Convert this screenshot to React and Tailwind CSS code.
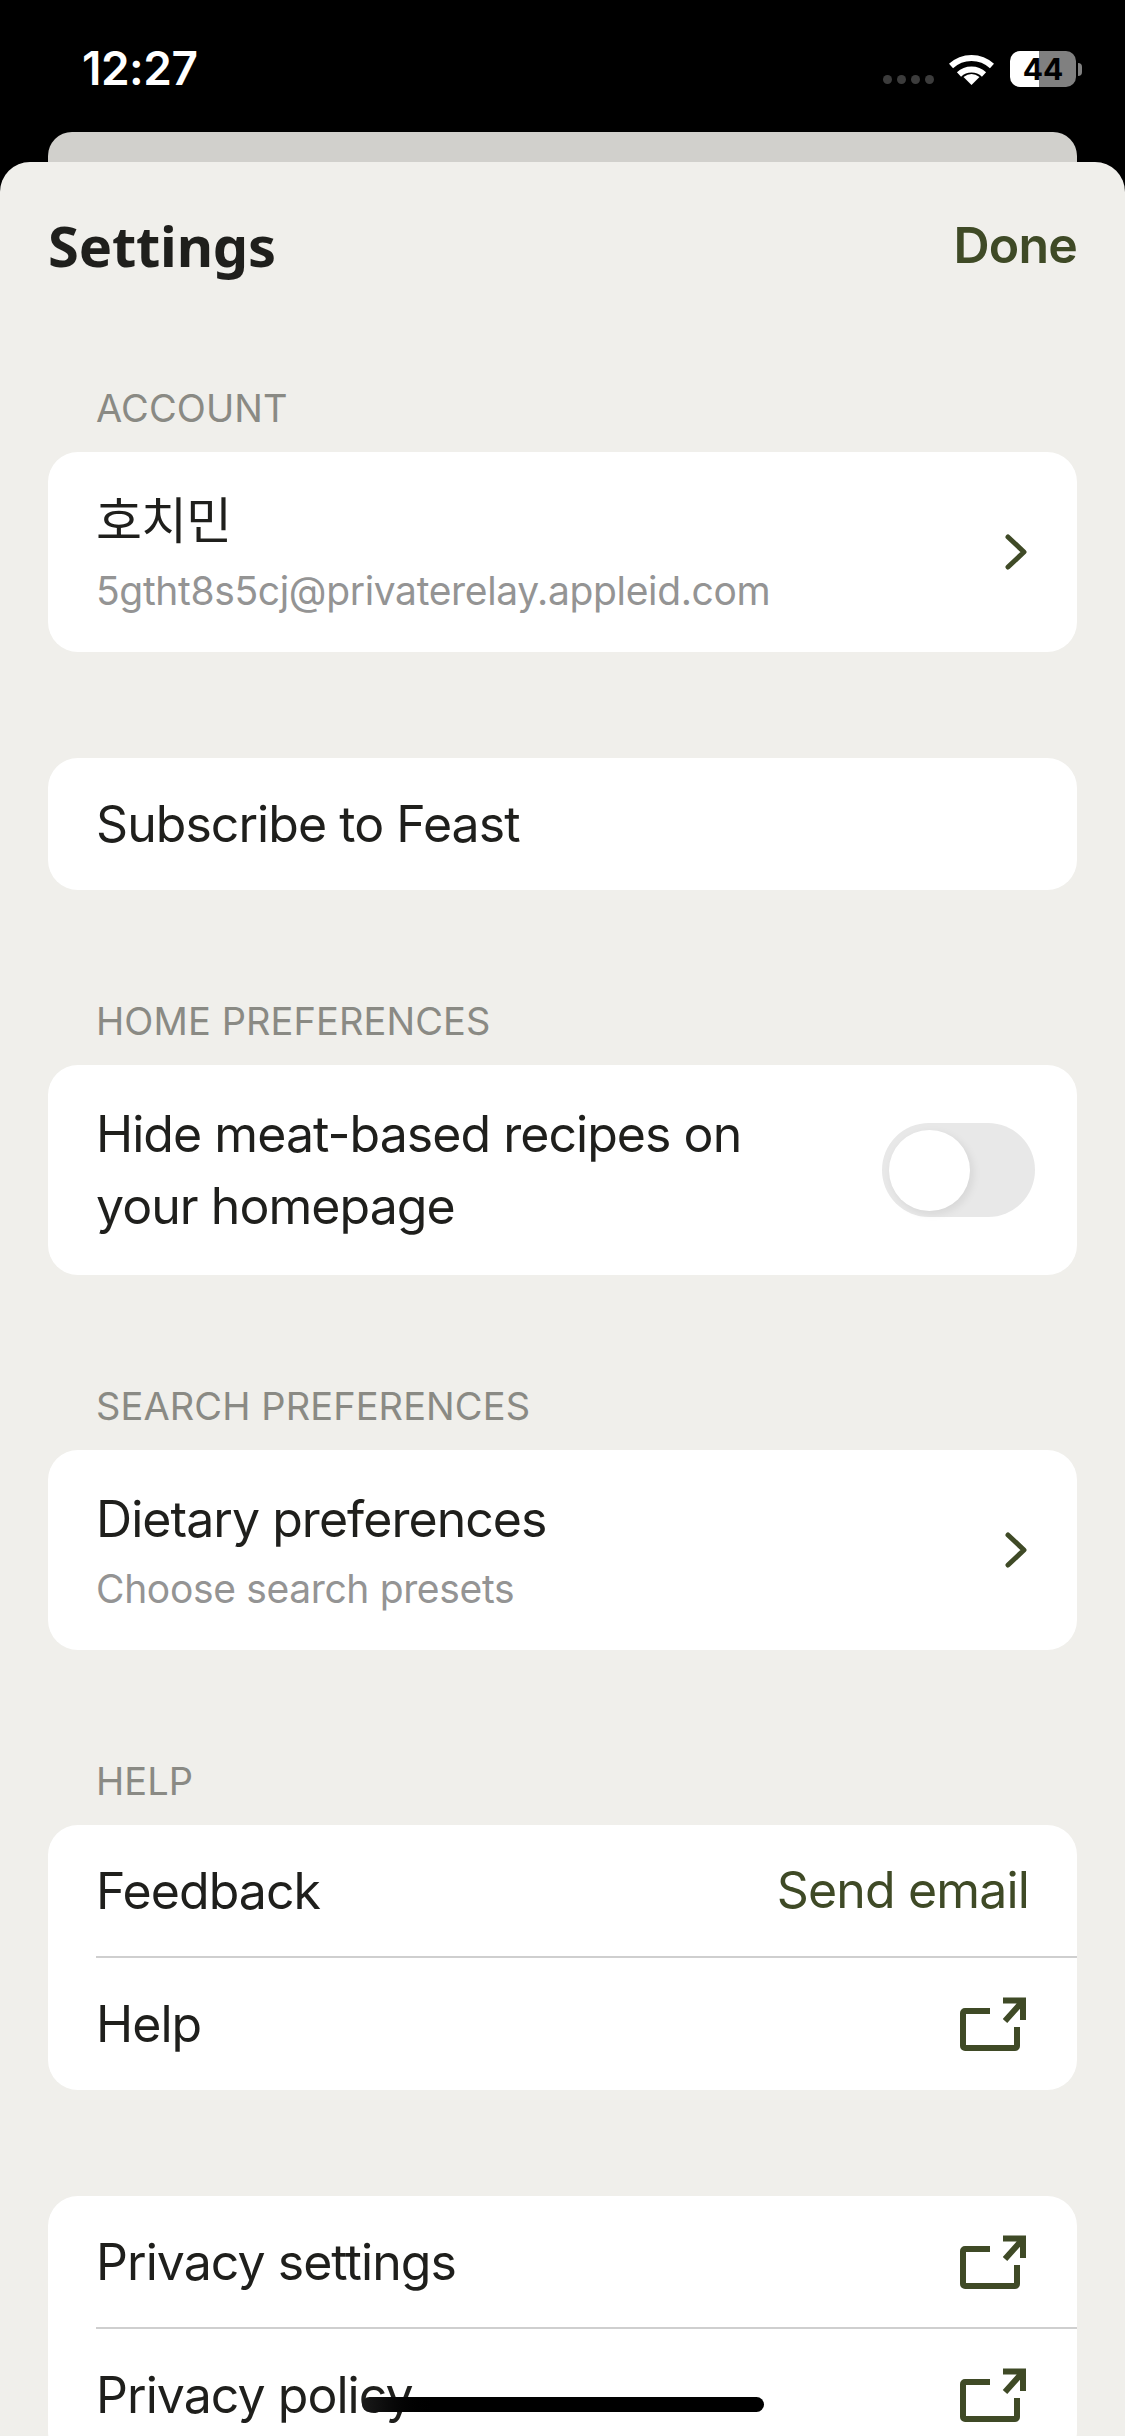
const GREEN = '#3f4a26';

const ExternalIcon = () => (
  <svg width="66" height="54" viewBox="0 0 66 54" fill="none" stroke={GREEN} strokeWidth="6" className="mr-[3px]">
    <path d="M30 14H5a2 2 0 0 0-2 2v33a2 2 0 0 0 2 2h50a2 2 0 0 0 2-2V30" />
    <path d="M43 3.500H63V23M45 24L62 5" />
  </svg>
);

const Chevron = () => (
  <svg width="22" height="36" viewBox="0 0 22 36" fill="none" stroke={GREEN} strokeWidth="5" strokeLinecap="round" strokeLinejoin="round">
    <path d="M3 3L19 18L3 33" />
  </svg>
);

const Wifi = () => (
  <svg width="45" height="33" viewBox="0 0 45 33" fill="none" stroke="#fff" strokeWidth="6">
    <path d="M2 14A30 30 0 0 1 43 14" />
    <path d="M10 22.500A18 18 0 0 1 35 22.500" />
    <path d="M22.500 33L14.500 25Q22.500 19 30.500 25Z" fill="#fff" stroke="none" />
  </svg>
);

const Label = ({ children }) => (
  <div className="px-[48px] h-[44px] mb-[22px] flex items-center text-[38px] tracking-[0.1px] text-[#8a8a84]">{children}</div>
);

const Card = ({ children }) => (
  <div className="bg-white rounded-[30px] overflow-hidden">{children}</div>
);

const Row = ({ label, right, divider }) => (
  <div className={`ml-[48px] pr-[48px] flex items-center justify-between ${divider ? 'border-b-2 border-[#cfcfcf] h-[133px]' : 'h-[132px]'}`}>
    <span className="text-[50px] leading-[72px] tracking-[-0.95px] text-[#1f1f1c]">{label}</span>
    {right}
  </div>
);

const SubRow = ({ title, sub }) => (
  <div className="h-[200px] pl-[48px] pr-[50px] flex items-center justify-between">
    <div>
      <div className="text-[50px] leading-[66px] tracking-[-0.95px] text-[#1f1f1c]">{title}</div>
      <div className="text-[39px] leading-[50px] mt-[12px] tracking-[-0.35px] text-[#949494]">{sub}</div>
    </div>
    <Chevron />
  </div>
);

export default function App() {
  return (
    <div className="w-[1125px] h-[2436px] overflow-hidden bg-black relative font-['Inter','Noto_Sans_CJK_KR',sans-serif]">
      {/* Status bar */}
      <div className="h-[132px] pl-[82px] pr-[43px] pt-[44px] flex justify-between items-start">
        <span className="text-[46px] leading-[48px] font-semibold tracking-[-0.5px] text-white">12:27</span>
        <div className="flex items-start">
          <div className="flex gap-[5px] mt-[31px] mr-[15px]">
            <div className="w-[9px] h-[9px] rounded-full bg-[#3c3c3c]" />
            <div className="w-[9px] h-[9px] rounded-full bg-[#3c3c3c]" />
            <div className="w-[9px] h-[9px] rounded-full bg-[#3c3c3c]" />
            <div className="w-[9px] h-[9px] rounded-full bg-[#3c3c3c]" />
          </div>
          <div className="mt-[8px] mr-[16px]">
            <Wifi />
          </div>
          <div className="flex items-center mt-[7px]">
            <div className="relative w-[66px] h-[36px] flex items-center justify-center">
              <div className="absolute left-0 top-0 bottom-0 w-[29px] rounded-l-[10px] bg-white" />
              <div className="absolute left-[29px] right-0 top-0 bottom-0 rounded-r-[10px] bg-[#808080]" />
              <span className="relative text-[30px] leading-none font-bold text-black">44</span>
            </div>
            <div className="w-[4px] h-[13px] ml-[2px] rounded-r-full bg-[#808080]" />
          </div>
        </div>
      </div>

      {/* Page peeking out behind the sheet */}
      <div className="h-[30px] mx-[48px] rounded-t-[24px] bg-[#d1d0cc]" />

      {/* Settings sheet */}
      <div className="bg-[#f0efeb] rounded-t-[30px] px-[48px] pt-[55px] h-[2400px]">
        <div className="h-[56px] flex items-center justify-between mb-[113px]">
          <h1 className="text-[56px] font-bold tracking-[-0.2px] text-[#1f1f1c] font-['Noto_Sans',sans-serif]">Settings</h1>
          <button className="text-[50px] font-semibold tracking-[-0.8px]" style={{ color: GREEN }}>Done</button>
        </div>

        <Label>ACCOUNT</Label>
        <Card>
          <SubRow title="호치민" sub="5gtht8s5cj@privaterelay.appleid.com" />
        </Card>

        <div className="mt-[106px]">
          <Card>
            <Row label="Subscribe to Feast" />
          </Card>
        </div>

        <div className="mt-[109px]">
          <Label>HOME PREFERENCES</Label>
          <Card>
            <div className="h-[210px] pl-[48px] pr-[42px] flex items-center justify-between">
              <div className="text-[50px] leading-[72px] tracking-[-0.95px] text-[#1f1f1c]">
                Hide meat-based recipes on
                <br />
                your homepage
              </div>
              <div className="w-[153px] h-[94px] rounded-full bg-[#e8e8e8] p-[7px]">
                <div className="w-[81px] h-[81px] rounded-full bg-white shadow-[3px_3px_8px_rgba(0,0,0,0.08)]" />
              </div>
            </div>
          </Card>
        </div>

        <div className="mt-[109px]">
          <Label>SEARCH PREFERENCES</Label>
          <Card>
            <SubRow title="Dietary preferences" sub="Choose search presets" />
          </Card>
        </div>

        <div className="mt-[109px]">
          <Label>HELP</Label>
          <Card>
            <Row
              divider
              label="Feedback"
              right={<span className="text-[50px] tracking-[-0.85px]" style={{ color: GREEN }}>Send email</span>}
            />
            <Row label="Help" right={<ExternalIcon />} />
          </Card>
        </div>

        <div className="mt-[106px]">
          <Card>
            <Row divider label="Privacy settings" right={<ExternalIcon />} />
            <Row label="Privacy policy" right={<ExternalIcon />} />
          </Card>
        </div>
      </div>

      {/* Home indicator */}
      <div className="absolute left-[362px] top-[2397px] w-[402px] h-[15px] rounded-full bg-gradient-to-r from-[#1a1a1a] to-black to-[20%]" />
    </div>
  );
}
